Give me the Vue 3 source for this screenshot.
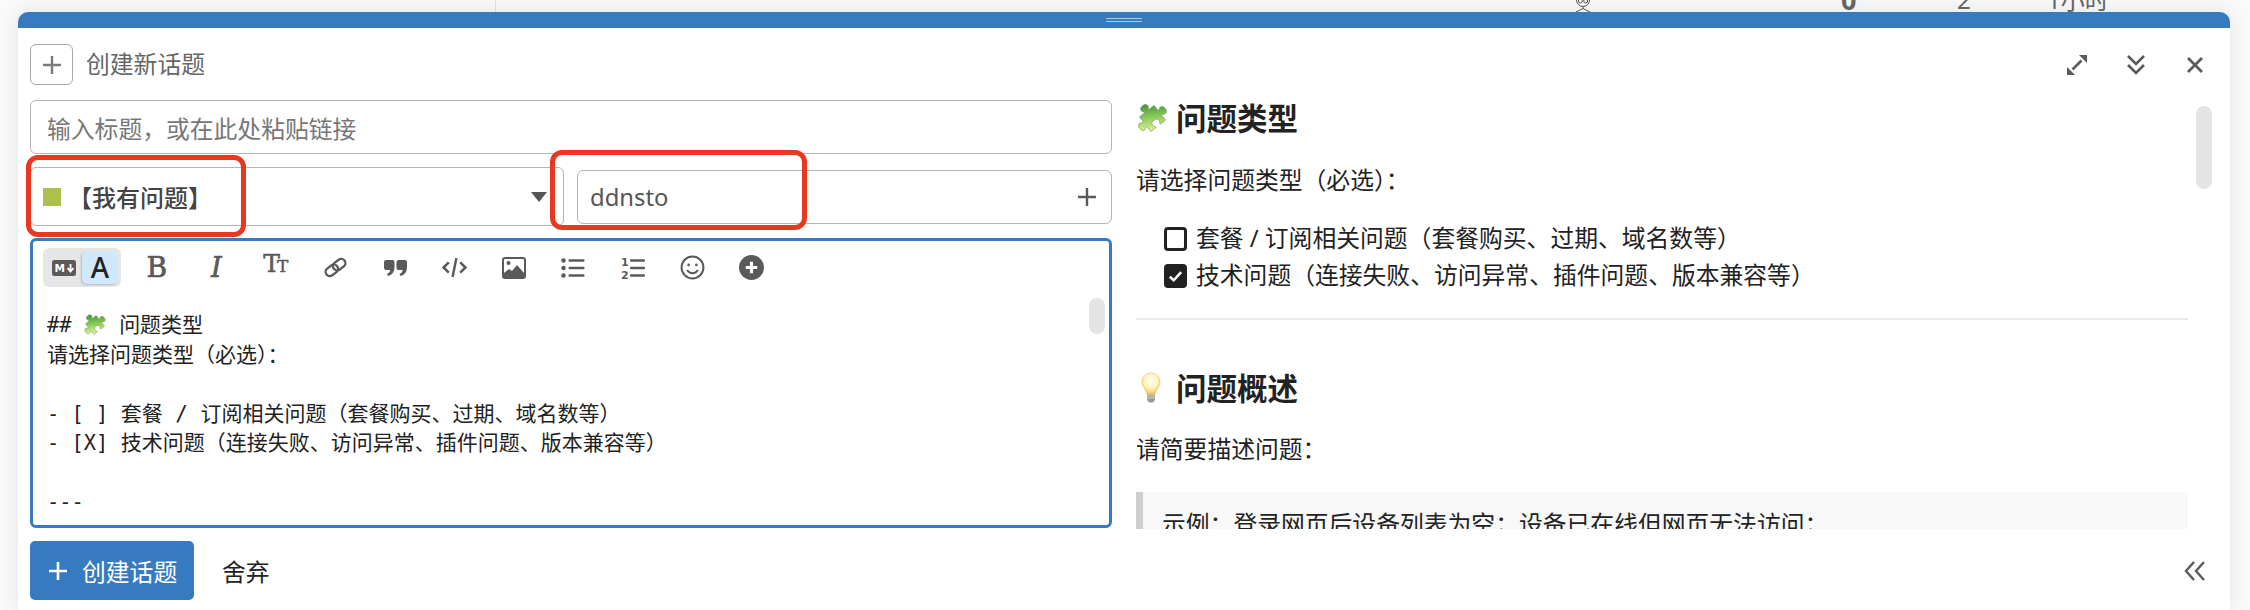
<script setup>
const editorLines = [
  { pre: '', text: '请选择问题类型（必选）：' },
  { pre: '', text: '\u00a0' },
  { pre: '- [ ] ', text: '套餐 / 订阅相关问题（套餐购买、过期、域名数等）' },
  { pre: '- [X] ', text: '技术问题（连接失败、访问异常、插件问题、版本兼容等）' },
  { pre: '', text: '\u00a0' },
  { pre: '---', text: '' }
]
</script>

<template>
  <div class="page">
    <svg class="defs" width="0" height="0" aria-hidden="true">
      <defs>
        <linearGradient id="pz" x1="0" y1="0" x2="0" y2="1" gradientTransform="rotate(38 .5 .5)">
          <stop offset="0" stop-color="#3f8a3a" />
          <stop offset=".5" stop-color="#84c455" />
          <stop offset="1" stop-color="#d6f28e" />
        </linearGradient>
        <radialGradient id="bulb" cx=".5" cy=".36" r=".62">
          <stop offset="0" stop-color="#fffef2" />
          <stop offset=".6" stop-color="#fff3c0" />
          <stop offset="1" stop-color="#f2c658" />
        </radialGradient>
        <symbol id="puzzle" viewBox="0 0 32 32">
          <g transform="rotate(-38 16 16)">
            <path fill="url(#pz)" stroke="#4f8f42" stroke-width=".5" d="M7 7H13C13.500 7 13.600 6.300 13 5.600 12.300 4.700 12 4 12 3.200 12 1.200 13.800 .3 16 .3S20 1.200 20 3.200C20 4 19.700 4.700 19 5.600 18.400 6.300 18.500 7 19 7H25V13C25 13.500 25.700 13.600 26.400 13 27.300 12.300 28 12 28.800 12 30.800 12 31.700 13.800 31.700 16S30.800 20 28.800 20C28 20 27.300 19.700 26.400 19 25.700 18.400 25 18.500 25 19V25H19C18.500 25 18.400 24.300 19 23.600 19.700 22.700 20 22 20 21.200 20 19.200 18.200 18 16 18S12 19.200 12 21.200C12 22 12.300 22.700 13 23.600 13.600 24.300 13.500 25 13 25H7V19C7 18.500 6.300 18.400 5.600 19 4.700 19.700 4 20 3.200 20 1.200 20 .3 18.200 .3 16S1.200 12 3.200 12C4 12 4.700 12.300 5.600 13 6.300 13.600 7 13.500 7 13Z" />
          </g>
        </symbol>
        <symbol id="lightbulb" viewBox="0 0 22 32">
          <path fill="url(#bulb)" stroke="#ecc666" stroke-width=".7" d="M11 1C5.600 1 2 5 2 9.800c0 3.800 2.400 6.400 3.800 9 .7 1.300 .9 2.400 1 3.400h8.400c.1-1 .3-2.100 1-3.400 1.400-2.600 3.800-5.200 3.800-9C20 5 16.400 1 11 1z" />
          <path fill="#9a9a94" d="M7 22.500h8v5.500l-2 2.500h-4l-2-2.500z" />
          <path stroke="#d8d8d2" stroke-width=".9" d="M7 24.300l8-.6M7 26.300l8-.6" />
        </symbol>
      </defs>
    </svg>

    <div class="behind">
      <div class="behind-row">
        <span class="vline"></span>
        <svg class="face" viewBox="0 0 24 24" fill="none" stroke="#555" stroke-width="1">
          <circle cx="12" cy="12" r="6.500" fill="#fff" />
          <circle cx="9.300" cy="13" r="2" />
          <circle cx="14.700" cy="13" r="2" />
          <path d="M12 18.500v2M5 24l7-3.500 7 3.500" />
        </svg>
        <span class="stat-zero">0</span>
        <span class="stat-two">2</span>
        <span class="stat-time">1小时</span>
      </div>
    </div>

    <section class="composer">
      <div class="grip"><span class="grip-lines"></span></div>
      <div class="body">
        <header class="head">
          <button class="add-box">
            <svg viewBox="0 0 24 24" width="24" height="24"><path d="M12 3v18M3 12h18" stroke="#7a7a7a" stroke-width="2.400" /></svg>
          </button>
          <span class="head-title">创建新话题</span>
          <div class="head-icons">
            <span class="head-icon">
              <svg viewBox="0 0 24 24" width="24" height="24"><path d="M7.500 16.500l9-9" stroke="#5a5a5a" stroke-width="2.600" /><path d="M14 2h8v8zM2 14v8h8z" fill="#5a5a5a" /></svg>
            </span>
            <span class="head-icon">
              <svg viewBox="0 0 24 24" width="24" height="24" fill="none" stroke="#5a5a5a" stroke-width="2.600"><path d="M4 3l8 8 8-8M4 12l8 8 8-8" /></svg>
            </span>
            <span class="head-icon">
              <svg viewBox="0 0 24 24" width="24" height="24" fill="none" stroke="#5a5a5a" stroke-width="2.800"><path d="M5 5l14 14M19 5L5 19" /></svg>
            </span>
          </div>
        </header>

        <div class="middle">
          <div class="left">
            <div class="field title-field">输入标题，或在此处粘贴链接</div>
            <div class="meta">
              <div class="field category">
                <span class="swatch"></span>
                <span class="cat-name">【我有问题】</span>
                <span class="caret"></span>
              </div>
              <div class="field tag">
                <span>ddnsto</span>
                <svg viewBox="0 0 20 20" width="20" height="20"><path d="M10 1v18M1 10h18" stroke="#5a5a5a" stroke-width="2.400" /></svg>
              </div>
            </div>
            <div class="editor">
              <div class="toolbar">
                <div class="mode">
                  <span class="mode-md">
                    <svg viewBox="0 0 24 16" width="24" height="16">
                      <rect width="24" height="16" rx="2.500" fill="#5a5a5a" />
                      <text x="2.500" y="12" font-size="10.500" font-weight="700" fill="#fff" font-family="DejaVu Sans">M</text>
                      <path d="M18.500 4v6.500M15.500 8l3 3.500 3-3.500" fill="none" stroke="#fff" stroke-width="1.800" />
                    </svg>
                  </span>
                  <span class="mode-a">A</span>
                </div>
                <div class="tools">
                  <span class="tool glyph-b">B</span>
                  <span class="tool glyph-i">I</span>
                  <span class="tool glyph-t"><span class="t-wrap">T<small>T</small></span></span>
                  <span class="tool">
                    <svg viewBox="0 0 24 24" width="25" height="25" fill="none" stroke="#5a5a5a" stroke-width="2.200">
                      <g transform="rotate(-38 12 12)">
                        <rect x="1" y="8" width="13" height="8" rx="4" />
                        <rect x="10" y="8" width="13" height="8" rx="4" />
                      </g>
                    </svg>
                  </span>
                  <span class="tool">
                    <svg viewBox="0 0 24 24" width="24" height="24" fill="#5a5a5a">
                      <path d="M3 4h6.500a2 2 0 0 1 2 2v5c0 5-2.500 8-6.500 9l-1-2c2-.8 3-2 3.200-4H3a2 2 0 0 1-2-2V6a2 2 0 0 1 2-2z" />
                      <path d="M15.500 4H22a2 2 0 0 1 2 2v5c0 5-2.500 8-6.500 9l-1-2c2-.8 3-2 3.200-4h-4.200a2 2 0 0 1-2-2V6a2 2 0 0 1 2-2z" />
                    </svg>
                  </span>
                  <span class="tool">
                    <svg viewBox="0 0 24 24" width="25" height="25" fill="none" stroke="#5a5a5a" stroke-width="2.400">
                      <path d="M6.500 7L1.500 12l5 5M17.500 7l5 5-5 5M13.800 3l-3.600 18" />
                    </svg>
                  </span>
                  <span class="tool">
                    <svg viewBox="0 0 24 24" width="24" height="24">
                      <rect x="1" y="2" width="22" height="20" rx="2" fill="none" stroke="#5a5a5a" stroke-width="2" />
                      <circle cx="6.500" cy="7" r="2" fill="#5a5a5a" />
                      <path d="M2 21v-4l5-4 3 2 5-6 7 8v4z" fill="#5a5a5a" />
                    </svg>
                  </span>
                  <span class="tool">
                    <svg viewBox="0 0 24 24" width="24" height="24" fill="#5a5a5a">
                      <circle cx="2.500" cy="4.500" r="2.200" /><circle cx="2.500" cy="12" r="2.200" /><circle cx="2.500" cy="19.500" r="2.200" />
                      <rect x="7.500" y="3.200" width="16" height="2.600" rx="1" /><rect x="7.500" y="10.700" width="16" height="2.600" rx="1" /><rect x="7.500" y="18.200" width="16" height="2.600" rx="1" />
                    </svg>
                  </span>
                  <span class="tool">
                    <svg viewBox="0 0 24 24" width="24" height="24" fill="#5a5a5a">
                      <text x="0" y="10" font-size="11" font-weight="700" font-family="DejaVu Sans">1</text>
                      <text x="0" y="23" font-size="11" font-weight="700" font-family="DejaVu Sans">2</text>
                      <rect x="9" y="3.200" width="15" height="2.600" rx="1" /><rect x="9" y="10.700" width="15" height="2.600" rx="1" /><rect x="9" y="18.200" width="15" height="2.600" rx="1" />
                    </svg>
                  </span>
                  <span class="tool">
                    <svg viewBox="0 0 24 24" width="25" height="25" fill="none" stroke="#5a5a5a" stroke-width="1.900">
                      <circle cx="12" cy="12" r="10.500" />
                      <circle cx="8.300" cy="9.500" r="1.300" fill="#5a5a5a" stroke="none" />
                      <circle cx="15.700" cy="9.500" r="1.300" fill="#5a5a5a" stroke="none" />
                      <path d="M6.800 14.500c1.200 2 3 3 5.200 3s4-1 5.200-3" />
                    </svg>
                  </span>
                  <span class="tool">
                    <svg viewBox="0 0 24 24" width="25" height="25">
                      <circle cx="12" cy="12" r="12" fill="#5a5a5a" />
                      <path d="M12 6.500v11M6.500 12h11" stroke="#fff" stroke-width="3" />
                    </svg>
                  </span>
                </div>
              </div>
              <div class="source">
                <div class="src-line"><span class="src-pre">## </span><svg class="src-emoji"><use href="#puzzle" /></svg><span class="src-pre">&nbsp;</span>问题类型</div>
                <div v-for="(line, i) in editorLines" :key="i" class="src-line"><span class="src-pre">{{ line.pre }}</span>{{ line.text }}</div>
              </div>
              <span class="editor-thumb"></span>
            </div>
          </div>

          <div class="preview">
            <h2 class="pv-head"><svg class="pv-puzzle"><use href="#puzzle" /></svg>问题类型</h2>
            <p class="pv-p first">请选择问题类型（必选）：</p>
            <ul class="checks">
              <li><span class="box"></span>套餐 / 订阅相关问题（套餐购买、过期、域名数等）</li>
              <li>
                <span class="box checked">
                  <svg viewBox="0 0 24 24" width="18" height="18" fill="none" stroke="#fff" stroke-width="3.600"><path d="M4 13l5.500 5L20 6.500" /></svg>
                </span>技术问题（连接失败、访问异常、插件问题、版本兼容等）
              </li>
            </ul>
            <hr class="rule" />
            <h2 class="pv-head second"><svg class="pv-bulb"><use href="#lightbulb" /></svg>问题概述</h2>
            <p class="pv-p desc">请简要描述问题：</p>
            <blockquote class="quote">示例：登录网页后设备列表为空；设备已在线但网页无法访问；</blockquote>
            <span class="preview-thumb"></span>
          </div>
        </div>

        <footer class="foot">
          <button class="create">
            <svg viewBox="0 0 20 20" width="20" height="20"><path d="M10 1v18M1 10h18" stroke="#fff" stroke-width="2.600" /></svg>
            <span>创建话题</span>
          </button>
          <button class="discard">舍弃</button>
          <svg class="collapse" viewBox="0 0 22 20" width="22" height="20" fill="none" stroke="#5a5a5a" stroke-width="2.400">
            <path d="M10 1L2 10l8 9M20 1l-8 9 8 9" />
          </svg>
        </footer>
      </div>
    </section>

    <span class="mark mark-left"></span>
    <span class="mark mark-right"></span>
  </div>
</template>

<style>
html, body { margin: 0; padding: 0; background: #fafafa; }
</style>

<style scoped>
.page {
  position: relative;
  width: 2250px;
  height: 610px;
  overflow: hidden;
  background: #fafafa;
  display: flex;
  flex-direction: column;
  font-family: "Noto Sans", "Noto Sans CJK SC", sans-serif;
  color: #222;
}
.defs { position: absolute; }
.behind { height: 12px; overflow: hidden; flex: none; }
.behind-row {
  height: 24px;
  margin-top: -12px;
  display: flex;
  align-items: center;
  color: #666;
  font-size: 24px;
  line-height: 24px;
}
.vline { width: 1px; height: 24px; background: #e2e2e2; margin-left: 495px; }
.face { width: 24px; height: 24px; margin-left: 1075px; }
.stat-zero { margin-left: 246px; font-weight: 700; font-size: 27px; width: 15px; }
.stat-two { margin-left: 101px; width: 14px; }
.stat-time { margin-left: 76px; }

.composer {
  position: relative;
  margin-left: 18px;
  width: 2212px;
  flex: 1;
  display: flex;
  flex-direction: column;
  border-radius: 10px 10px 0 0;
  box-shadow: 0 0 22px rgba(0, 0, 0, .1);
  background: #fff;
}
.grip {
  height: 16px;
  flex: none;
  background: #367bbf;
  border-radius: 10px 10px 0 0;
  display: flex;
  align-items: center;
  justify-content: center;
}
.grip-lines {
  width: 36px;
  height: 4px;
  border-top: 1px solid #a9cbec;
  border-bottom: 1px solid #a9cbec;
  box-sizing: border-box;
}
.body {
  flex: 1;
  min-height: 0;
  padding: 16px 18px 0 12px;
  display: flex;
  flex-direction: column;
}
.head { display: flex; align-items: center; height: 41px; flex: none; }
.add-box {
  width: 43px;
  height: 41px;
  box-sizing: border-box;
  background: #fff;
  border: 1.500px solid #a8a8a8;
  border-radius: 6px;
  padding: 0;
  display: flex;
  align-items: center;
  justify-content: center;
}
.head-title { margin-left: 13px; font-size: 23.800px; color: #666; line-height: 41px; }
.head-icons { margin-left: auto; margin-right: -12px; display: flex; }
.head-icon { width: 59px; display: flex; justify-content: center; align-items: center; }

.middle {
  margin-top: 15px;
  height: 429px;
  flex: none;
  display: grid;
  grid-template-columns: 1082px 1fr;
  column-gap: 24px;
}
.left { display: flex; flex-direction: column; min-width: 0; height: 428px; }
.field {
  box-sizing: border-box;
  background: #fff;
  border: 1.500px solid #b5b5b5;
  border-radius: 6px;
  display: flex;
  align-items: center;
}
.title-field {
  height: 54px;
  flex: none;
  padding-left: 16px;
  font-size: 23.800px;
  color: #777;
}
.meta {
  margin-top: 13px;
  height: 59px;
  flex: none;
  display: flex;
  gap: 13px;
  align-items: center;
}
.category { width: 534px; height: 59px; padding: 0 16px 0 12px; font-size: 24px; font-weight: 500; color: #444; }
.swatch { width: 18px; height: 18px; background: #adbf4c; flex: none; }
.cat-name { margin-left: 7px; }
.caret {
  margin-left: auto;
  width: 0;
  height: 0;
  border-left: 8px solid transparent;
  border-right: 8px solid transparent;
  border-top: 10px solid #555;
}
.tag {
  flex: 1;
  height: 54px;
  padding: 0 14px 0 12px;
  font-size: 23.800px;
  color: #555;
  justify-content: space-between;
}
.editor {
  position: relative;
  margin-top: 12px;
  flex: 1;
  min-height: 0;
  box-sizing: border-box;
  border: 3px solid #367bbf;
  border-radius: 6px;
  overflow: hidden;
  background: #fff;
}
.toolbar { display: flex; align-items: center; padding: 7px 0 0 10px; height: 46px; box-sizing: border-box; }
.mode {
  width: 78px;
  height: 39px;
  flex: none;
  box-sizing: border-box;
  background: #e6e6e6;
  border-radius: 6px;
  display: flex;
  align-items: center;
  padding: 0 3px 0 9px;
  justify-content: space-between;
}
.mode-md { display: flex; }
.mode-a {
  width: 36px;
  height: 33px;
  background: #d1e8fb;
  border-radius: 5px;
  box-shadow: -1px 1px 2px rgba(80, 110, 150, .35);
  text-align: center;
  font-size: 28px;
  line-height: 33px;
  font-weight: 500;
  color: #222;
  font-family: "Noto Sans", sans-serif;
}
.tools { display: flex; margin-left: 6px; }
.tool {
  width: 59.500px;
  height: 39px;
  display: flex;
  align-items: center;
  justify-content: center;
  color: #5a5a5a;
}
.glyph-b { font: 400 28px/39px "DejaVu Serif", serif; -webkit-text-stroke: .7px #5a5a5a; }
.glyph-i { font: italic 400 27px/39px "DejaVu Serif", serif; -webkit-text-stroke: .7px #5a5a5a; }
.glyph-t { font: 400 25px/39px "DejaVu Serif", serif; -webkit-text-stroke: .5px #5a5a5a; }
.t-wrap { display: flex; align-items: baseline; margin-bottom: 5px; }
.t-wrap small { font-size: 17px; margin-left: -3px; }
.source {
  padding: 24px 0 0 14px;
  font-family: "DejaVu Sans Mono", "Noto Sans CJK SC", monospace;
  font-size: 21px;
  line-height: 29.500px;
  color: #222;
  white-space: pre;
}
.src-pre { font-size: 20.400px; }
.src-line { height: 29.500px; }
.src-emoji { width: 24px; height: 24px; vertical-align: -5px; margin-left: -1px; }
.editor-thumb {
  position: absolute;
  right: 4px;
  top: 57px;
  width: 16px;
  height: 36px;
  border-radius: 8px;
  background: #e4e4e4;
}

.preview {
  position: relative;
  overflow: hidden;
  min-width: 0;
  padding-right: 24px;
  font-size: 23.800px;
  color: #222;
}
.pv-head {
  margin: 0;
  height: 36px;
  display: flex;
  align-items: center;
  font-size: 30.500px;
  line-height: 36px;
  font-weight: 700;
}
.pv-head.second { margin-top: 50px; }
.pv-puzzle { width: 33px; height: 33px; margin-right: 7px; flex: none; }
.pv-bulb { width: 22px; height: 32px; margin: 0 14px 0 4px; flex: none; }
.pv-p { margin: 0; line-height: 34px; height: 34px; }
.pv-p.first { margin-top: 27px; }
.pv-p.desc { margin-top: 26px; }
.checks { list-style: none; margin: 23px 0 0; padding: 0 0 0 28px; }
.checks li { height: 37px; line-height: 37px; display: flex; align-items: center; }
.box {
  width: 23px;
  height: 24px;
  box-sizing: border-box;
  border: 3px solid #222;
  border-radius: 4px;
  margin-right: 9px;
  flex: none;
  display: flex;
  align-items: center;
  justify-content: center;
}
.box.checked { background: #222; }
.rule { margin: 24px 0 0; border: 0; border-top: 2px solid #e9e9e9; }
.quote {
  margin: 26px 0 0;
  padding: 15px 26px 0 19px;
  height: 70px;
  line-height: 34px;
  background: #f8f8f8;
  border-left: 7px solid #cfcfcf;
}
.preview-thumb {
  position: absolute;
  right: 0;
  top: 6px;
  width: 16px;
  height: 83px;
  border-radius: 8px;
  background: #e4e4e4;
}

.foot { margin-top: 12px; display: flex; align-items: center; height: 59px; flex: none; }
.create {
  width: 164px;
  height: 59px;
  border: 0;
  border-radius: 5px;
  background: #367bbf;
  color: #fff;
  display: flex;
  align-items: center;
  padding: 0 0 0 18px;
  gap: 14px;
  font: 23.800px "Noto Sans", "Noto Sans CJK SC", sans-serif;
}
.discard {
  margin-left: 28px;
  padding: 0;
  border: 0;
  background: transparent;
  color: #222;
  font: 23.800px "Noto Sans", "Noto Sans CJK SC", sans-serif;
}
.collapse { margin-left: auto; margin-right: 6px; }

.mark {
  position: absolute;
  box-sizing: border-box;
  border: 5.500px solid #e8381f;
  border-radius: 12px;
  pointer-events: none;
}
.mark-left { left: 26px; top: 155px; width: 220px; height: 82px; }
.mark-right { left: 550px; top: 150px; width: 257px; height: 80px; }
</style>
